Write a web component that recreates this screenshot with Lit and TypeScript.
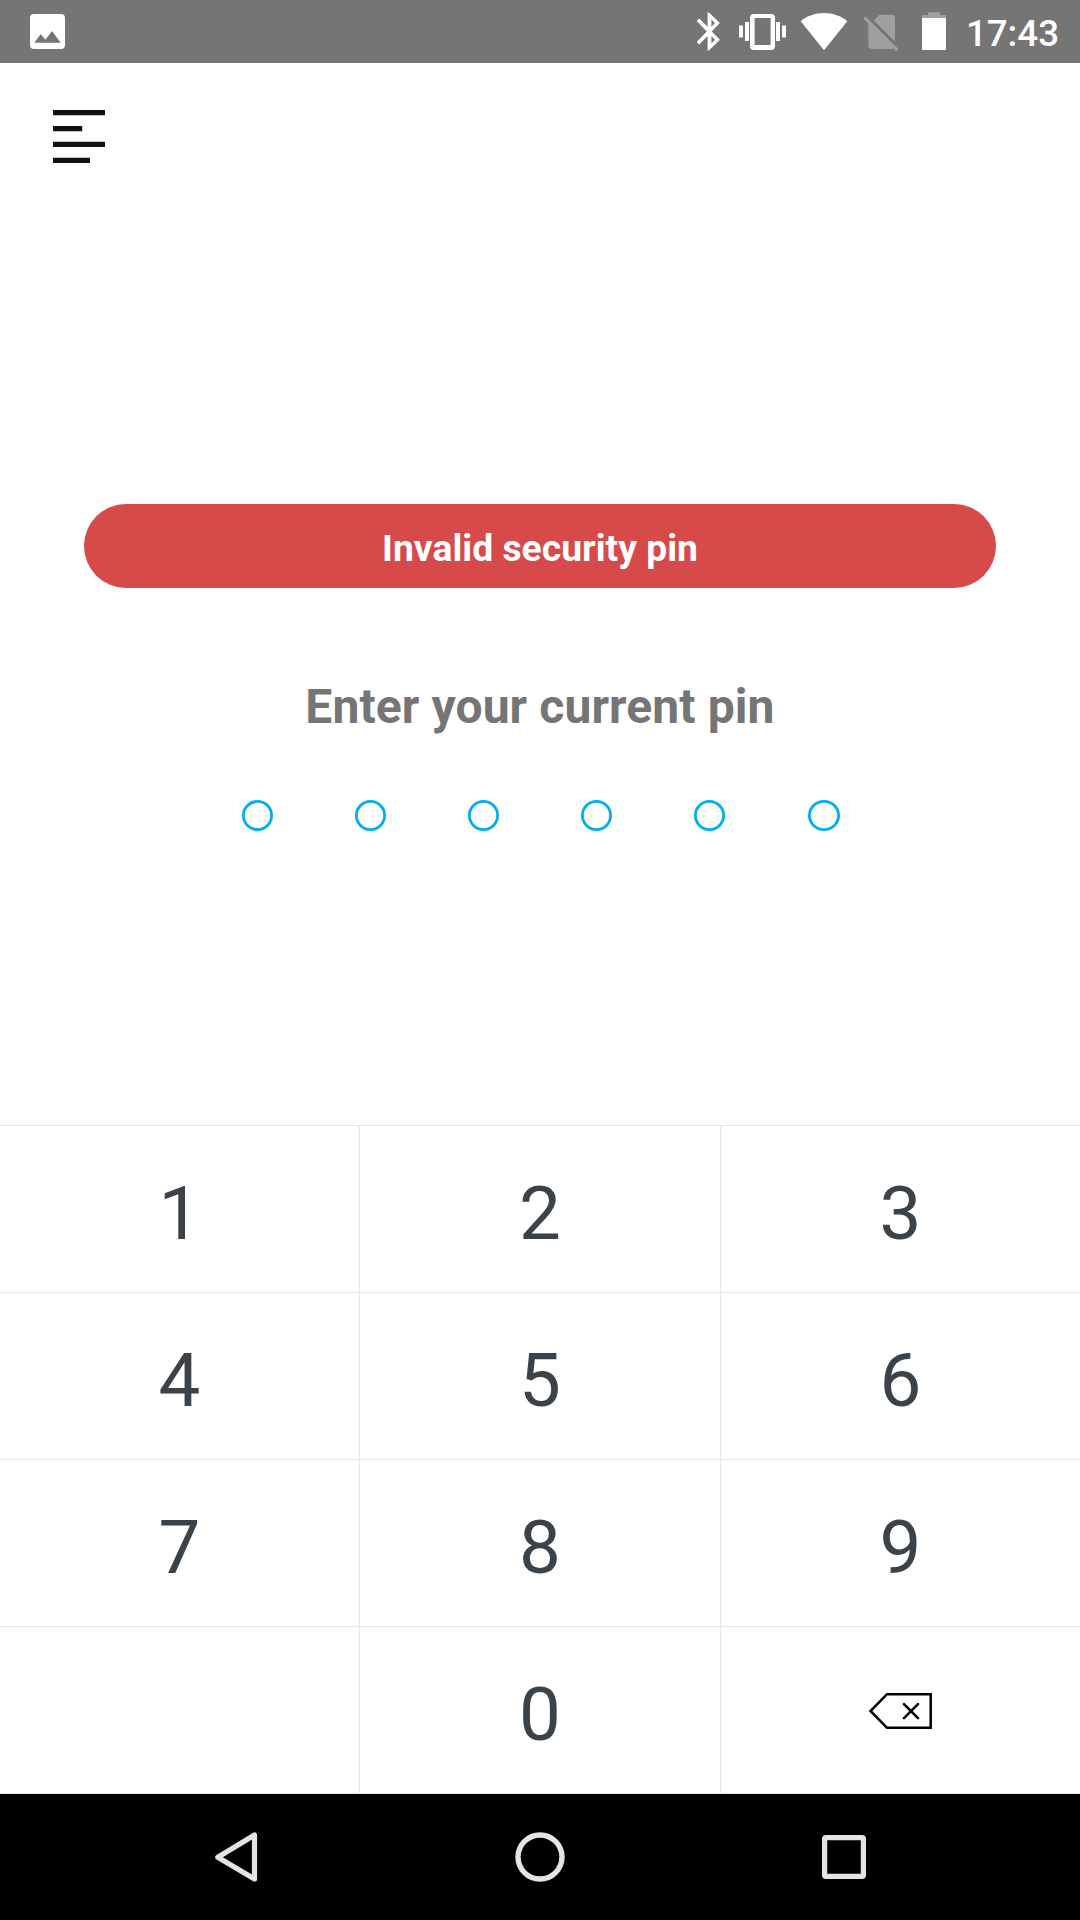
import { LitElement, html, svg, css } from "lit";
import { customElement } from "lit/decorators.js";

const KEYS = ["1", "2", "3", "4", "5", "6", "7", "8", "9", "", "0", "del"];

@customElement("status-bar")
class StatusBar extends LitElement {
  static styles = css`
    :host { display: block; height: 63px; background: #757575; }
    svg { display: block; }
    .bar { display: flex; align-items: flex-start; height: 63px; }
    .fill { flex: 1; }
    .time { font: 500 36.700px/44px Roboto, sans-serif; color: #fff; width: 93px; margin: 12px 21px 0 0; display: flex; justify-content: flex-end; white-space: nowrap; }
  `;
  render() {
    return html`<div class="bar">
      <svg width="100" height="63" viewBox="0 0 100 63">
        <path fill="#fff" fill-rule="evenodd" d="M34 14h27a4 4 0 0 1 4 4v27a4 4 0 0 1-4 4H34a4 4 0 0 1-4-4V18a4 4 0 0 1 4-4zM34.300 42.800h26.400L52 31l-6.600 8.800-4.600-5.800z"/>
      </svg>
      <div class="fill"></div>
      <svg width="276" height="63" viewBox="690 0 276 63">
        <path fill="#fff" fill-rule="evenodd" d="M719.900 22.900L708.900 12.500H707.600V26.800L699.200 18.600 696.700 21.100 706.800 31.400 696.700 41.900 699.200 44.400 707.600 36.100V50.500H708.900L719.900 39.800 711.700 31.400zM711.400 19.600L715 22.900 711.400 26.800zM715 39.800L711.400 43.500V36.100z"/>
        <path fill="#fff" fill-rule="evenodd" d="M754 14h17a4 4 0 0 1 4 4v28a4 4 0 0 1-4 4h-17a4 4 0 0 1-4-4V18a4 4 0 0 1 4-4zM754.600 18v27h16V18z"/>
        <path fill="#fff" d="M745 22h4v19h-4zM739 25.500h4v12h-4zM776 22h4v19h-4zM782 25.500h4v12h-4z"/>
        <path fill="#fff" d="M800.700 21.200C807 16 815 13 824 13s17 3 23.300 8.200L824 50.300z"/>
        <path fill="#9f9f9f" d="M895 41.800V18a3.300 3.300 0 0 0-3.300-3.300H879.500L873.700 20.500zM865.500 16.500L863.400 18.600 868.300 23.600V45.600A3.500 3.500 0 0 0 871.800 49H891.500Q892.600 49 893.500 48.500L896.200 51.200 898.500 49z"/>
        <path fill="#9f9f9f" d="M928 12.300h12V15h6v3h-24v-3h6z"/>
        <path fill="#fff" d="M922 18h24v32h-24z"/>
      </svg>
      <div class="time">17:43</div>
    </div>`;
  }
}

@customElement("pin-pad")
class PinPad extends LitElement {
  static styles = css`
    :host { display: block; }
    .pad { display: grid; grid-template-columns: 360px 361px 359px; grid-auto-rows: 167px; border-top: 1px solid #e6e6e6; }
    .key { box-sizing: border-box; border-right: 1px solid #e6e6e6; border-bottom: 1px solid #e6e6e6; display: flex; align-items: center; justify-content: center; font: 400 74.500px/88px Roboto, sans-serif; color: #3a424a; padding-top: 10px; }
    .key:nth-child(3n) { border-right: 0; }
    .del { padding: 2px 1px 0 0; }
    svg { display: block; }
  `;
  render() {
    return html`<div class="pad">
      ${KEYS.map((k) =>
        k === "del"
          ? html`<div class="key del">
              <svg width="64" height="38" viewBox="868 1692 64 38" fill="none" stroke="#000">
                <path stroke-width="2.500" d="M887 1694.200H930.700V1727.800H887L870.500 1711z"/>
                <path stroke-width="2.600" stroke-linecap="round" d="M904 1704.200l14 14M918 1704.200l-14 14"/>
              </svg></div>`
          : html`<div class="key">${k}</div>`
      )}
    </div>`;
  }
}

@customElement("nav-bar")
class NavBar extends LitElement {
  static styles = css`
    :host { display: block; height: 126px; background: #000; }
    svg { display: block; }
    .bar { display: flex; justify-content: space-between; align-items: center; height: 126px; padding: 0 210px 0 212px; }
  `;
  render() {
    return html`<div class="bar">
      <svg width="50" height="52" viewBox="212 1831 50 52"><path fill="none" stroke="#e4e4e4" stroke-width="5.200" stroke-linejoin="round" d="M217.800 1857.200L254.500 1835V1879z"/></svg>
      <svg width="52" height="52" viewBox="514 1831 52 52"><circle cx="540" cy="1857" r="22" fill="none" stroke="#e4e4e4" stroke-width="5.400"/></svg>
      <svg width="52" height="52" viewBox="818 1831 52 52"><rect x="824.600" y="1837.600" width="38.800" height="38.800" rx="1.500" fill="none" stroke="#e4e4e4" stroke-width="5.200"/></svg>
    </div>`;
  }
}

@customElement("app-root")
class AppRoot extends LitElement {
  static styles = css`
    :host { display: block; width: 1080px; height: 1920px; background: #fff; font-family: Roboto, sans-serif; overflow: hidden; }
    .screen { display: flex; flex-direction: column; height: 1920px; }
    .main { flex: 1; display: flex; flex-direction: column; }
    .menu { display: block; margin: 46px 0 0 53px; }
    .banner { margin: 341px 84px 0; height: 84px; border-radius: 42px; background: #d64a4a; color: #fff; font-weight: 700; font-size: 37.300px; line-height: 88px; text-align: center; }
    .title { margin-top: 91px; font-weight: 700; font-size: 48px; letter-spacing: 0.1px; line-height: 56px; color: #757575; text-align: center; }
    .dots { display: block; margin: 64px 0 0 240px; }
  `;
  render() {
    return html`<div class="screen">
      <status-bar></status-bar>
      <div class="main">
        <svg class="menu" width="54" height="54" viewBox="0 0 54 54">
          <path fill="#111" d="M0 1h52v5.300H0zM0 17h29.200v5.300H0zM0 32.700h52V38H0zM0 48.700h37V54H0z"/>
        </svg>
        <div class="banner">Invalid security pin</div>
        <div class="title">Enter your current pin</div>
        <svg class="dots" width="604" height="34" viewBox="240 799 604 34">
          ${[257.5, 370.5, 483.5, 596.5, 709.5, 824].map(
            (x) => svg`<ellipse cx=${x} cy="815.5" rx=${x === 824 ? 14.6 : 14.1} ry="14.1" fill="none" stroke="#00aeef" stroke-width="2.8"/>`
          )}
        </svg>
      </div>
      <pin-pad></pin-pad>
      <nav-bar></nav-bar>
    </div>`;
  }
}
